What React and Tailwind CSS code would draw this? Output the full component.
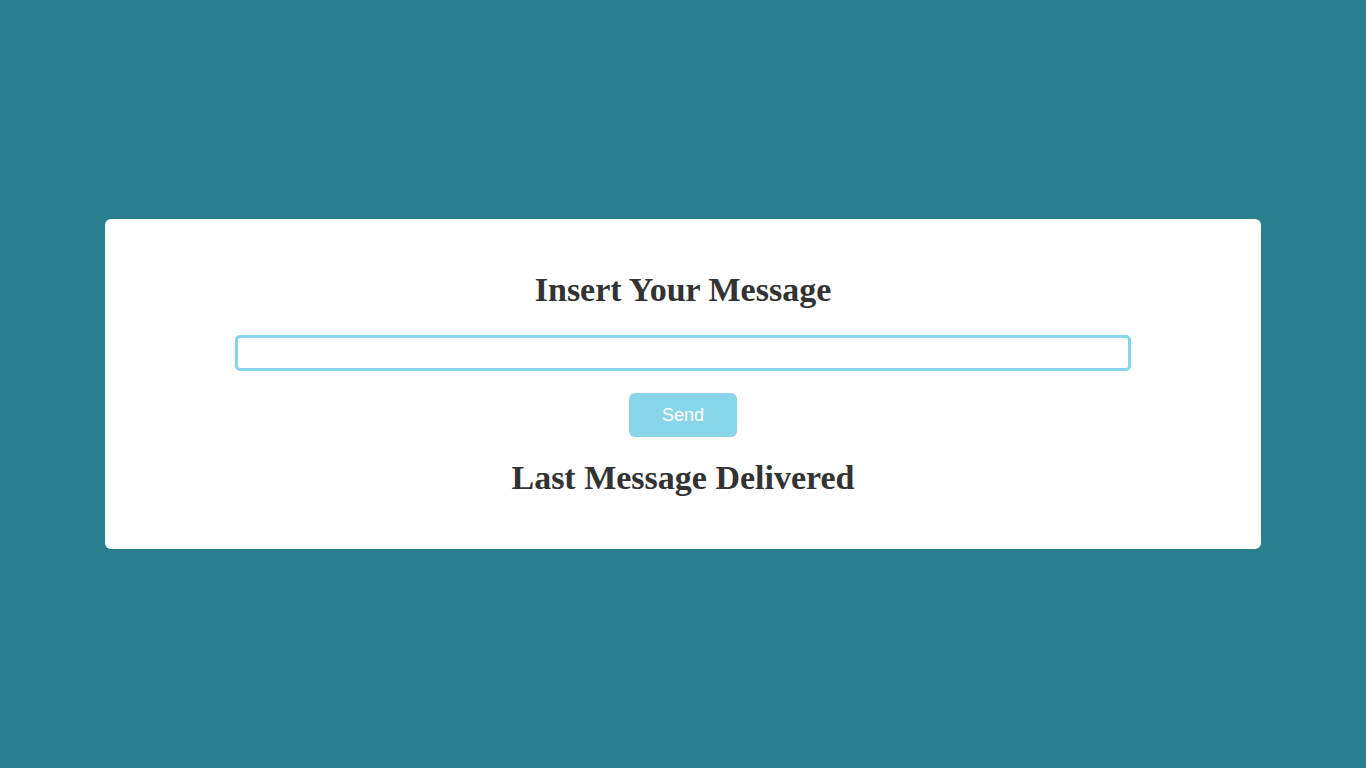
export default function App() {
  return (
    <div className="min-h-screen w-full bg-[#297f8e] flex items-center justify-center">
      <div className="w-[1156px] h-[330px] bg-white rounded-[6px] flex flex-col items-center">
        <h1 className="mt-[51px] text-[34px] leading-[40px] font-bold text-[#333333] text-center font-['Liberation_Serif',serif]">Insert Your Message</h1>
        <input type="text" className="mt-[25px] w-[896px] h-[36px] border-[3px] border-[#87d5ea] rounded-[5px] outline-none px-2" />
        <button className="mt-[22px] w-[108px] h-[44px] bg-[#89d5ea] rounded-[6px] text-white text-[18px] font-['Liberation_Sans',Arial,sans-serif]">Send</button>
        <h2 className="mt-[21px] text-[34px] leading-[40px] font-bold text-[#333333] text-center font-['Liberation_Serif',serif]">Last Message Delivered</h2>
      </div>
    </div>
  );
}
